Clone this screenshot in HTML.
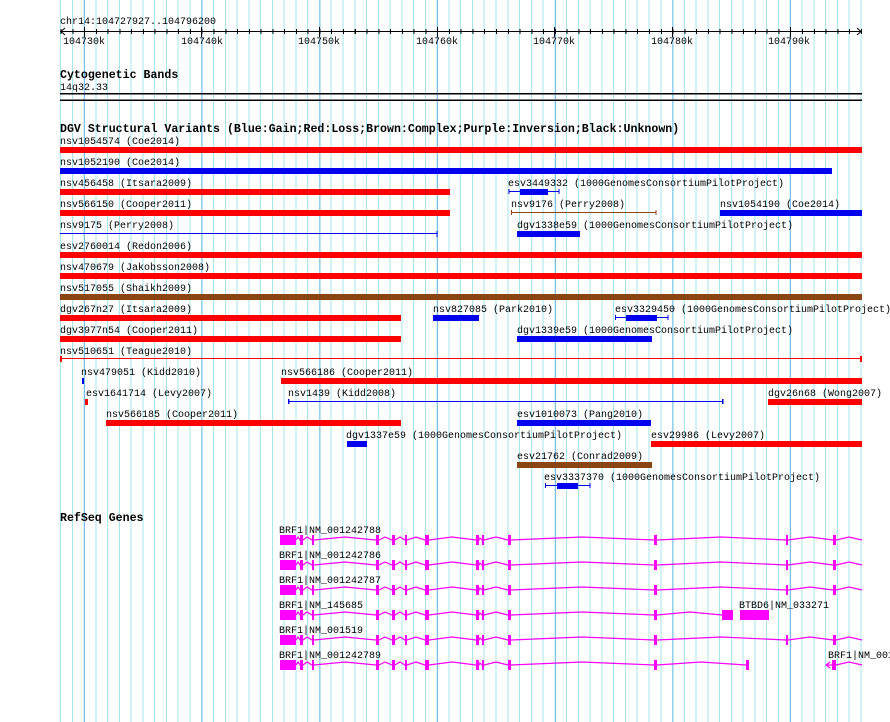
<!DOCTYPE html>
<html><head><meta charset="utf-8"><style>
html,body{margin:0;padding:0;background:#fff;width:890px;height:722px;overflow:hidden}
#grid{position:absolute;left:60px;top:0;width:802px;height:722px;
background:repeating-linear-gradient(90deg,rgba(128,192,232,0) 0 24px,#80c0e8 24px 25px,rgba(128,192,232,0) 25px 117.7px),
repeating-linear-gradient(90deg,#a6e6ee 0 1px,rgba(166,230,238,0) 1px 11.77px);}
svg{position:absolute;left:0;top:0}
text{font-family:"Liberation Mono",monospace;font-size:10px;fill:#000}
.t{font-weight:bold;font-size:11.6px}
</style></head><body>
<div id="grid"></div>
<div style="position:absolute;left:60px;top:29px;width:802px;height:5px;background:repeating-linear-gradient(90deg,#000 0 1px,rgba(0,0,0,0) 1px 11.77px);background-position:0.5px 0;"></div>
<svg width="890" height="722" xmlns="http://www.w3.org/2000/svg">
<defs>
<g id="gene">
<rect x="280" y="-5" width="16" height="10" fill="#f0f"/>
<g fill="#f0f">
<rect x="300" y="-5" width="3" height="10"/><rect x="312" y="-5" width="2" height="10"/>
<rect x="376" y="-5" width="3" height="10"/><rect x="392" y="-5" width="3" height="10"/>
<rect x="405" y="-5" width="2" height="10"/><rect x="425" y="-5" width="4" height="10"/>
<rect x="476" y="-5" width="3" height="10"/><rect x="482" y="-5" width="2" height="10"/>
<rect x="508" y="-5" width="3" height="10"/>
</g>
<polyline fill="none" stroke="#f0f" stroke-width="1.2" points="296,0 298,-3 300,0 303,0 307,-3 312,0 314,0 345,-3 376,0 379,0 385,-3 392,0 395,0 400,-3 405,0 407,0 416,-3 425,0 429,0 452,-3 476,0 479,0 480,-2 482,0 484,0 496,-3 508,0"/>
</g>
<g id="tail">
<g fill="#f0f"><rect x="654" y="-5" width="3" height="10"/><rect x="786" y="-5" width="2" height="10"/><rect x="833" y="-5" width="3" height="10"/></g>
<polyline fill="none" stroke="#f0f" stroke-width="1.2" points="511,0 582,-3 654,0 657,0 721,-3 786,0 788,0 810,-3 833,0 836,0 849,-3 862,0"/>
</g>
</defs>

<text x="60" y="24">chr14:104727927..104796200</text>
<line x1="60" y1="31.5" x2="862" y2="31.5" stroke="#000"/>
<polyline points="65,28 61,31.5 65,35" fill="none" stroke="#000"/>
<polyline points="857,28 861,31.5 857,35" fill="none" stroke="#000"/>
<g stroke="#000">
<line x1="84.5" y1="27" x2="84.5" y2="37"/><line x1="201.5" y1="27" x2="201.5" y2="37"/><line x1="319.5" y1="27" x2="319.5" y2="37"/><line x1="437.5" y1="27" x2="437.5" y2="37"/><line x1="554.5" y1="27" x2="554.5" y2="37"/><line x1="672.5" y1="27" x2="672.5" y2="37"/><line x1="790.5" y1="27" x2="790.5" y2="37"/>
</g>
<text x="63" y="44">104730k</text><text x="181" y="44">104740k</text><text x="298" y="44">104750k</text><text x="416" y="44">104760k</text><text x="533" y="44">104770k</text><text x="651" y="44">104780k</text><text x="768" y="44">104790k</text>

<text class="t" x="60" y="78">Cytogenetic Bands</text>
<text x="60" y="90">14q32.33</text>
<rect x="60" y="93" width="802" height="1.5" fill="#000"/>
<rect x="60" y="99.5" width="802" height="1.5" fill="#000"/>

<text class="t" x="60" y="132">DGV Structural Variants (Blue:Gain;Red:Loss;Brown:Complex;Purple:Inversion;Black:Unknown)</text>

<g>
<text x="60" y="144">nsv1054574 (Coe2014)</text><rect x="60" y="147" width="802" height="6" fill="#f00"/>
<text x="60" y="165">nsv1052190 (Coe2014)</text><rect x="60" y="168" width="772" height="6" fill="#00e"/>
<text x="60" y="186">nsv456458 (Itsara2009)</text><rect x="60" y="189" width="390" height="6" fill="#f00"/>
<text x="508" y="186">esv3449332 (1000GenomesConsortiumPilotProject)</text>
<line x1="509" y1="191.5" x2="559" y2="191.5" stroke="#00e"/><rect x="508.5" y="189" width="1" height="5" fill="#00e"/><rect x="558.5" y="189" width="1" height="5" fill="#00e"/><rect x="520" y="189" width="28" height="6" fill="#00e"/>
<text x="60" y="207">nsv566150 (Cooper2011)</text><rect x="60" y="210" width="390" height="6" fill="#f00"/>
<text x="511" y="207">nsv9176 (Perry2008)</text>
<line x1="511" y1="212.5" x2="656" y2="212.5" stroke="#8b4513"/><rect x="511" y="210" width="1" height="5" fill="#8b4513"/><rect x="655.5" y="210" width="1" height="5" fill="#8b4513"/>
<text x="720" y="207">nsv1054190 (Coe2014)</text><rect x="720" y="210" width="142" height="6" fill="#00e"/>
<text x="60" y="228">nsv9175 (Perry2008)</text>
<line x1="60" y1="233.5" x2="437" y2="233.5" stroke="#00e"/><rect x="436.5" y="231" width="1" height="6" fill="#00e"/>
<text x="517" y="228">dgv1338e59 (1000GenomesConsortiumPilotProject)</text><rect x="517" y="231" width="63" height="6" fill="#00e"/>
<text x="60" y="249">esv2760014 (Redon2006)</text><rect x="60" y="252" width="802" height="6" fill="#f00"/>
<text x="60" y="270">nsv470679 (Jakobsson2008)</text><rect x="60" y="273" width="802" height="6" fill="#f00"/>
<text x="60" y="291">nsv517055 (Shaikh2009)</text><rect x="60" y="294" width="802" height="6" fill="#8b4513"/>
<text x="60" y="312">dgv267n27 (Itsara2009)</text><rect x="60" y="315" width="341" height="6" fill="#f00"/>
<text x="433" y="312">nsv827085 (Park2010)</text><rect x="433" y="315" width="46" height="6" fill="#00e"/>
<text x="615" y="312">esv3329450 (1000GenomesConsortiumPilotProject)</text>
<line x1="615" y1="317.5" x2="668" y2="317.5" stroke="#00e"/><rect x="615" y="315" width="1" height="5" fill="#00e"/><rect x="667.5" y="315" width="1" height="5" fill="#00e"/><rect x="626" y="315" width="31" height="6" fill="#00e"/>
<text x="60" y="333">dgv3977n54 (Cooper2011)</text><rect x="60" y="336" width="341" height="6" fill="#f00"/>
<text x="517" y="333">dgv1339e59 (1000GenomesConsortiumPilotProject)</text><rect x="517" y="336" width="135" height="6" fill="#00e"/>
<text x="60" y="354">nsv510651 (Teague2010)</text>
<line x1="60" y1="358.5" x2="862" y2="358.5" stroke="#f00"/><rect x="60" y="356" width="2" height="6" fill="#f00"/><rect x="860" y="356" width="2" height="6" fill="#f00"/>
<text x="81" y="375">nsv479051 (Kidd2010)</text><rect x="82" y="378" width="2" height="6" fill="#00e"/>
<text x="281" y="375">nsv566186 (Cooper2011)</text><rect x="281" y="378" width="581" height="6" fill="#f00"/>
<text x="86" y="396">esv1641714 (Levy2007)</text><rect x="85" y="399" width="3" height="6" fill="#f00"/>
<text x="288" y="396">nsv1439 (Kidd2008)</text>
<line x1="288" y1="401.5" x2="723" y2="401.5" stroke="#00e"/><rect x="288" y="399" width="1.5" height="5" fill="#00e"/><rect x="722" y="399" width="1.5" height="5" fill="#00e"/>
<text x="768" y="396">dgv26n68 (Wong2007)</text><rect x="768" y="399" width="94" height="6" fill="#f00"/>
<text x="106" y="417">nsv566185 (Cooper2011)</text><rect x="106" y="420" width="295" height="6" fill="#f00"/>
<text x="517" y="417">esv1010073 (Pang2010)</text><rect x="517" y="420" width="134" height="6" fill="#00e"/>
<text x="346" y="438">dgv1337e59 (1000GenomesConsortiumPilotProject)</text><rect x="347" y="441" width="20" height="6" fill="#00e"/>
<text x="651" y="438">esv29986 (Levy2007)</text><rect x="651" y="441" width="211" height="6" fill="#f00"/>
<text x="517" y="459">esv21762 (Conrad2009)</text><rect x="517" y="462" width="135" height="6" fill="#8b4513"/>
<text x="544" y="480">esv3337370 (1000GenomesConsortiumPilotProject)</text>
<line x1="545" y1="485.5" x2="590" y2="485.5" stroke="#00e"/><rect x="545" y="483" width="1" height="5" fill="#00e"/><rect x="589.5" y="483" width="1" height="5" fill="#00e"/><rect x="557" y="483" width="21" height="6" fill="#00e"/>
</g>

<text class="t" x="60" y="521">RefSeq Genes</text>
<text x="279" y="533">BRF1|NM_001242788</text>
<use href="#gene" transform="translate(0,540)"/><use href="#tail" transform="translate(0,540)"/>
<text x="279" y="558">BRF1|NM_001242786</text>
<use href="#gene" transform="translate(0,565)"/><use href="#tail" transform="translate(0,565)"/>
<text x="279" y="583">BRF1|NM_001242787</text>
<use href="#gene" transform="translate(0,590)"/><use href="#tail" transform="translate(0,590)"/>
<text x="279" y="608">BRF1|NM_145685</text>
<use href="#gene" transform="translate(0,615)"/>
<g transform="translate(0,615)"><rect x="654" y="-5" width="3" height="10" fill="#f0f"/>
<polyline fill="none" stroke="#f0f" stroke-width="1.2" points="511,0 582,-3 654,0 657,0 690,-3 722,0"/>
<rect x="722" y="-5" width="11" height="10" fill="#f0f"/><rect x="740" y="-5" width="29" height="10" fill="#f0f"/></g>
<text x="739" y="608">BTBD6|NM_033271</text>
<text x="279" y="633">BRF1|NM_001519</text>
<use href="#gene" transform="translate(0,640)"/><use href="#tail" transform="translate(0,640)"/>
<text x="279" y="658">BRF1|NM_001242789</text>
<use href="#gene" transform="translate(0,665)"/>
<g transform="translate(0,665)"><rect x="654" y="-5" width="3" height="10" fill="#f0f"/><rect x="746" y="-5" width="3" height="10" fill="#f0f"/>
<polyline fill="none" stroke="#f0f" stroke-width="1.2" points="511,0 582,-3 654,0 657,0 701,-3 746,0"/>
<polyline fill="none" stroke="#f0f" stroke-width="1.2" points="826,0 833,0 836,0 849,-3 862,0"/>
<polyline fill="none" stroke="#f0f" stroke-width="1.2" points="830,-3 826,0 830,3"/>
<rect x="832" y="-5" width="4" height="10" fill="#f0f"/></g>
<text x="828" y="658">BRF1|NM_001242789</text>
</svg>
</body></html>
